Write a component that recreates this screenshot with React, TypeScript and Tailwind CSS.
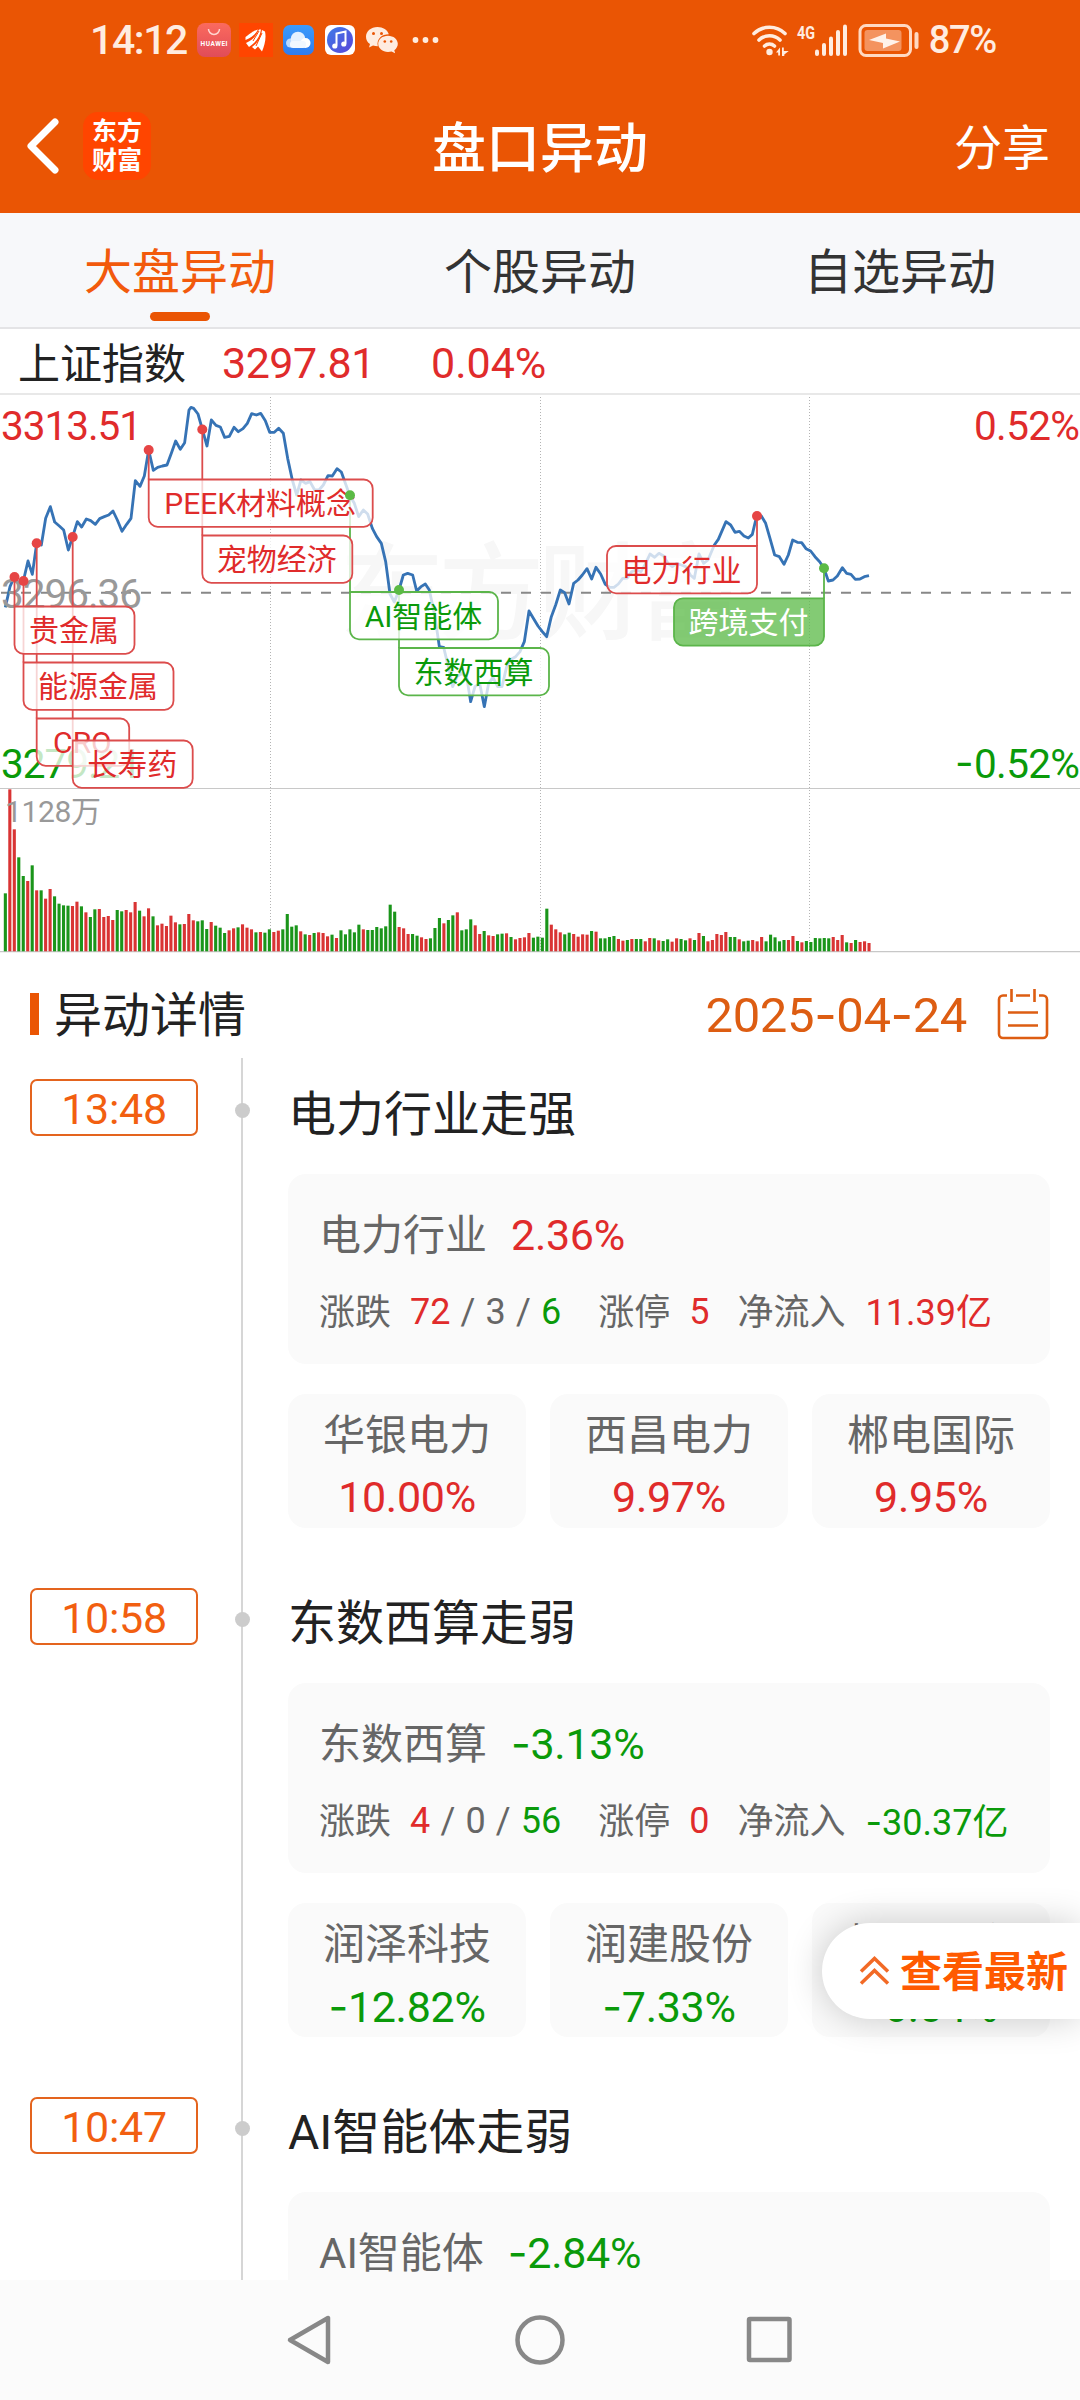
type Stock = { name: string; change: string };

type MoveEvent = {
  time: string;
  title: string;
  sector: string;
  change: string;
  up: string;
  flat: string;
  down: string;
  limit: string;
  inflow: string;
  stocks: Stock[];
};

type Tag = {
  text: string;
  // anchor point on the curve
  px: number;
  py: number;
  top: number;
  width: number;
  color: "red" | "green";
  side?: "left" | "right";
  filled?: boolean;
};

const RED = "#e02b2b";
const GREEN = "#0a9a0a";

const events: MoveEvent[] = [
  {
    time: "13:48",
    title: "电力行业走强",
    sector: "电力行业",
    change: "2.36%",
    up: "72",
    flat: "3",
    down: "6",
    limit: "5",
    inflow: "11.39亿",
    stocks: [
      { name: "华银电力", change: "10.00%" },
      { name: "西昌电力", change: "9.97%" },
      { name: "郴电国际", change: "9.95%" },
    ],
  },
  {
    time: "10:58",
    title: "东数西算走弱",
    sector: "东数西算",
    change: "-3.13%",
    up: "4",
    flat: "0",
    down: "56",
    limit: "0",
    inflow: "-30.37亿",
    stocks: [
      { name: "润泽科技", change: "-12.82%" },
      { name: "润建股份", change: "-7.33%" },
      { name: "拓维信息", change: "-6.04%" },
    ],
  },
  {
    time: "10:47",
    title: "AI智能体走弱",
    sector: "AI智能体",
    change: "-2.84%",
    up: "",
    flat: "",
    down: "",
    limit: "",
    inflow: "",
    stocks: [],
  },
];

// Minute curve, in thirds of a pixel
const curve =
  "16,652 30,590 43,560 56,580 70,573 84,513 97,553 110,460 124,465 137,385 151,350 164,396 178,408 191,420 205,480 218,440 232,395 245,411 259,387 272,392 286,403 299,386 313,380 326,375 339,363 352,390 366,424 380,403 393,385 406,272 420,289 433,258 446,180 460,241 473,232 487,228 501,225 514,190 527,153 541,178 554,158 567,60 573,52 581,55 594,72 607,118 621,168 634,90 648,106 661,111 674,142 688,139 702,112 715,125 729,116 742,100 755,71 769,75 782,70 796,92 809,127 823,127 836,115 850,130 863,205 877,270 890,315 903,270 917,280 930,275 944,300 957,300 970,285 984,257 997,258 1011,236 1024,246 1038,285 1049,316 1063,340 1076,380 1090,360 1103,372 1117,415 1130,440 1144,460 1157,515 1170,612 1183,636 1197,600 1210,555 1223,550 1238,555 1250,603 1263,590 1276,582 1288,600 1305,680 1318,770 1331,772 1345,830 1358,890 1371,860 1385,850 1400,860 1412,935 1425,890 1439,880 1453,950 1466,880 1479,862 1493,890 1506,890 1520,830 1533,808 1547,800 1560,785 1573,755 1587,663 1600,685 1614,708 1627,725 1640,740 1654,680 1667,645 1681,600 1694,608 1707,642 1721,580 1734,570 1747,555 1761,536 1775,567 1788,532 1802,552 1816,583 1830,592 1842,592 1855,582 1868,565 1882,564 1895,545 1910,540 1923,545 1937,520 1950,492 1964,502 1977,490 1990,497 2004,520 2017,530 2030,520 2044,525 2057,530 2071,555 2083,565 2097,492 2111,520 2124,510 2143,465 2155,448 2178,395 2192,405 2205,427 2218,424 2232,438 2245,444 2257,433 2270,378 2284,378 2297,400 2310,445 2324,495 2338,500 2352,523 2365,495 2378,450 2392,457 2405,458 2418,476 2432,483 2445,500 2459,515 2472,535 2485,573 2499,570 2512,558 2527,533 2540,550 2553,553 2566,568 2580,567 2593,560 2607,557";

// Top edge of every volume bar (thirds of a pixel), negative = falling minute
const volumes = [
  -340, 28, 148, -232, -288, 303, -256, 331, -331, 356, 327, -349, -371, -376, -377, 378, 365, -379, 397, -411,
  -388, 387, 411, 408, 420, -390, -394, 390, 397, 366, -392, 409, 385, -409, 436, 431, 438, 407, 427, -433,
  432, 402, 421, -424, -421, -447, 426, -437, -443, -459, 451, 445, -442, 433, 443, 448, -457, 456, -458, -448,
  456, 452, -448, -402, -440, -436, 454, -463, 465, -459, 457, 459, 469, -464, 474, -451, -463, -448, -457, -434,
  448, -450, -450, -441, -445, -439, -374, -395, 441, 445, 462, -462, -467, 472, 477, -475, -444, -414, 430, -420,
  -406, 397, -451, -448, -418, 436, 462, -453, 466, 468, -463, -461, 460, -471, 478, 474, 472, 459, -473, -470,
  -473, -386, 434, 448, 457, -463, -458, 462, 470, 463, 464, -453, 455, -475, -475, -471, -468, 477, 482, -480,
  477, -477, -477, 484, 474, -475, 481, -483, -478, 485, 475, -477, -481, 475, -480, 459, -468, 484, 480, 462,
  465, 456, -471, -471, 478, -484, -482, 480, 484, 471, -484, -464, -472, -484, -480, 480, 468, -483, 487, -483,
  -486, -474, -475, -474, -475, 471, 480, 465, -487, 489, -480, 486, 484, 489,
];

const tags: Tag[] = [
  { text: "贵金属", px: 14.5, py: 187, top: 216.5, width: 120, color: "red" },
  { text: "能源金属", px: 23.5, py: 191, top: 272.5, width: 150, color: "red" },
  { text: "CRO", px: 36.7, py: 153.3, top: 328.5, width: 92.5, color: "red" },
  { text: "长寿药", px: 72.7, py: 147, top: 350.5, width: 120, color: "red" },
  { text: "PEEK材料概念", px: 148.7, py: 60, top: 89.5, width: 224, color: "red" },
  { text: "宠物经济", px: 202.3, py: 39.5, top: 145.5, width: 150, color: "red" },
  { text: "AI智能体", px: 350, py: 105.3, top: 202, width: 148, color: "green" },
  { text: "东数西算", px: 399, py: 200, top: 258, width: 150, color: "green" },
  { text: "电力行业", px: 757, py: 126, top: 156, width: 150, color: "red", side: "right" },
  { text: "跨境支付", px: 824, py: 178.3, top: 208.3, width: 150, color: "green", side: "right", filled: true },
];

function tone(value: string) {
  return value.startsWith("-") ? "text-[#0a9a0a]" : "text-[#e02b2b]";
}

// Roboto's hyphen is too short next to its digits, Inter has a wider one
function Num({ value }: { value: string }) {
  return (
    <>
      {value.split(/(-)/).map((part, i) =>
        part === "-" ? (
          <span key={i} className="font-[Inter]">
            -
          </span>
        ) : (
          part
        )
      )}
    </>
  );
}

function StatusBar() {
  return (
    <div className="flex h-[79px] items-center pt-[1px] pl-[90px] pr-[84px] text-[#ffece0]">
      <span className="w-[107px] text-[41px] leading-none font-medium tracking-[-1.4px]">14:12</span>
      <svg width="245" height="36" viewBox="0 0 245 36">
        <defs>
          <linearGradient id="bag" x1="0" y1="0" x2="0" y2="1">
            <stop offset="0" stopColor="#fb6a5e" />
            <stop offset="1" stopColor="#e04c58" />
          </linearGradient>
          <linearGradient id="sky" x1="0" y1="0" x2="0" y2="1">
            <stop offset="0" stopColor="#3b9bfb" />
            <stop offset="1" stopColor="#2f7cf0" />
          </linearGradient>
          <linearGradient id="disc" x1="0" y1="0" x2="1" y2="1">
            <stop offset="0" stopColor="#3f7be8" />
            <stop offset="1" stopColor="#5a46d8" />
          </linearGradient>
        </defs>
        <rect x="0" y="1" width="34" height="34" rx="8" fill="url(#bag)" />
        <path d="M11.500 7a5.500 5.500 0 0 0 11 0" fill="none" stroke="#ffd5cf" strokeWidth="1.500" />
        <text x="17" y="23.500" fontSize="6.500" fontWeight="700" textAnchor="middle" textLength="27" fill="#fff">
          HUAWEI
        </text>
        <rect x="42" y="1" width="34" height="34" fill="#ff4500" />
        <path
          d="M48.500 15c6-4 8-6.500 12.500-7.500c-2 4-6 8-12.500 10.500zM49 21c7-3 10-7 13-13.500l2 0c-1 7-5 13-12 17.500zM55 25c6-4 9-10 10-17l3 1.500c1.500 7-.5 14-3 20l-4-5l-3 3z"
          fill="#fff"
        />
        <path d="M56 19l6-10M59 24l6-13" stroke="#ff4500" strokeWidth="1" />
        <rect x="86" y="3" width="31" height="30" rx="7" fill="url(#sky)" />
        <circle cx="93.500" cy="21" r="4.500" fill="#b9d9ff" />
        <circle cx="101" cy="17" r="7.300" fill="#e4f1ff" />
        <circle cx="108.500" cy="21" r="5" fill="#fff" />
        <rect x="93" y="19" width="16" height="7" rx="3" fill="#f2f8ff" />
        <rect x="128" y="3" width="30" height="30" rx="6" fill="#fff" />
        <circle cx="143" cy="18" r="13" fill="url(#disc)" />
        <path d="M139.500 23.500V11.500l9-2v12" fill="none" stroke="#fff" strokeWidth="2" />
        <circle cx="137.800" cy="24" r="2.600" fill="#fff" />
        <circle cx="146.800" cy="22" r="2.600" fill="#fff" />
        <path
          d="M180.500 5c-6.500 0-11.500 4.300-11.500 9.700c0 3 1.500 5.600 4 7.400l-1 3.500l4-2c1.600.5 3.200.7 4.800.7c-1.500-7.500 4-12 11-12c-1.200-4.300-5.800-7.300-11.300-7.300z"
          fill="#ffece0"
        />
        <path
          d="M191 13.800c-5.500 0-9.800 3.600-9.800 8c0 4.500 4.300 8.100 9.800 8.100c1.300 0 2.500-.2 3.600-.5l3.500 1.800l-.8-3c2.200-1.500 3.500-3.800 3.500-6.400c0-4.400-4.400-8-9.800-8z"
          fill="#ffece0"
        />
        <circle cx="176.500" cy="11.500" r="1.500" fill="#ea5504" />
        <circle cx="184.500" cy="11.500" r="1.500" fill="#ea5504" />
        <circle cx="187.800" cy="19.500" r="1.300" fill="#ea5504" />
        <circle cx="194.200" cy="19.500" r="1.300" fill="#ea5504" />
        <circle cx="218.500" cy="18" r="2.900" fill="#ffece0" />
        <circle cx="228.500" cy="18" r="2.900" fill="#ffece0" />
        <circle cx="238.500" cy="18" r="2.900" fill="#ffece0" />
      </svg>
      <svg width="170" height="36" viewBox="0 0 170 36" className="ml-auto mr-[8px]">
        <g fill="none" stroke="#ffece0" strokeWidth="3.600" strokeLinecap="round">
          <path d="M3 11.500a22.500 22.500 0 0 1 31 0" />
          <path d="M8 18a15 15 0 0 1 21 0" />
          <path d="M13.500 24a7.500 7.500 0 0 1 10 0" />
        </g>
        <circle cx="18.500" cy="30" r="3.200" fill="#ffece0" />
        <path d="M25 30.500l4-5v8h-1.800v-3zM31 25.500h1.800v3.500l5 0l-4.500 3.500v1.500h-2.300z" fill="#ffece0" />
        <text x="46" y="17" fontSize="19" fontWeight="700" textLength="18" lengthAdjust="spacingAndGlyphs" fill="#ffece0">
          4G
        </text>
        <g fill="#ffece0">
          <rect x="64" y="27.500" width="4" height="6.500" rx="2" />
          <rect x="71" y="21" width="4" height="13" rx="2" />
          <rect x="78" y="14.500" width="4" height="19.500" rx="2" />
          <rect x="85" y="8" width="4" height="26" rx="2" />
          <rect x="92" y="2.500" width="4" height="31.500" rx="2" />
        </g>
        <rect x="109" y="3.500" width="50.500" height="30" rx="6" fill="none" stroke="#ffd9c2" strokeWidth="3" />
        <rect x="113.500" y="8" width="37" height="21" rx="3" fill="#f4935f" />
        <path d="M118 17.500l14 3v5.500l17-7l-14-3V11z" fill="#fff2ea" transform="translate(0 .5)" />
        <rect x="163.500" y="10" width="4" height="17" rx="2" fill="#ffd9c2" />
      </svg>
      <span className="text-[38px] leading-none font-medium tracking-[-1.3px]">87%</span>
    </div>
  );
}

function Header() {
  return (
    <header className="h-[213px] bg-[#ea5504]">
      <StatusBar />
      <div className="grid h-[134px] grid-cols-3 items-center text-white">
        <div className="flex items-center pl-[25px]">
          <svg width="36" height="60" viewBox="0 0 36 60" fill="none" stroke="#fff" strokeWidth="7" strokeLinecap="round" strokeLinejoin="round">
            <path d="M30 6L6 30L30 54" />
          </svg>
          <div className="ml-[22px] flex h-[68px] w-[68px] flex-col items-center justify-center rounded-[15px] bg-[#ff4500] text-[25px] leading-[29px] font-bold">
            <span>东方</span>
            <span>财富</span>
          </div>
        </div>
        <h1 className="pt-[8px] text-center text-[54px] leading-none font-medium">盘口异动</h1>
        <span className="pt-[6px] pr-[30px] text-right text-[48px] leading-none">分享</span>
      </div>
    </header>
  );
}

function Tabs() {
  const tabs = ["大盘异动", "个股异动", "自选异动"];
  return (
    <nav className="grid h-[116px] grid-cols-3 border-b-2 border-[#e4e4e6] bg-[#f7f8fa]">
      {tabs.map((tab, i) => (
        <div key={tab} className="flex flex-col items-center">
          <span className={`mt-[30px] h-[60px] text-[48px] leading-[60px] ${i === 0 ? "text-[#f25a0c]" : "text-[#333]"}`}>
            {tab}
          </span>
          {i === 0 && <i className="mt-[9px] h-[9px] w-[60px] rounded-full bg-[#ea5504]" />}
        </div>
      ))}
    </nav>
  );
}

function TagShape({ tag }: { tag: Tag }) {
  const { px, top, width: w, side, filled } = tag;
  const h = 47.3;
  const r = 9;
  const stroke = tag.color === "red" ? "#dc4c4c" : "#5bb54a";
  const x = side === "right" ? px - w : px;
  // the corner that meets the stem stays square
  const tl = side === "right" ? r : 0;
  const tr = side === "right" ? 0 : r;
  const d = `M${x + tl} ${top}H${x + w - tr}a${tr} ${tr} 0 0 1 ${tr} ${tr}V${top + h - r}a${r} ${r} 0 0 1 ${-r} ${r}H${x + r}a${r} ${r} 0 0 1 ${-r} ${-r}V${top + tl}a${tl} ${tl} 0 0 1 ${tl} ${-tl}z`;
  const textColor = filled ? "#fff" : tag.color === "red" ? RED : GREEN;
  return (
    <g>
      <path d={d} fill={filled ? "#5cba48" : "#fff"} fillOpacity={0.76} stroke={stroke} strokeWidth="1.8" />
      <text x={x + w / 2 - 0.5} y={top + 34.5} fontSize="30" textAnchor="middle" fill={textColor}>
        {tag.text}
      </text>
    </g>
  );
}

function Chart() {
  return (
    <svg width="1080" height="563" viewBox="0 3 1080 563" className="block">
      <rect x="0" y="3" width="1080" height="2" fill="#e8e8e8" />
      <text x="541" y="241" fontSize="106" fontWeight="500" textAnchor="middle" textLength="404" fill="#f7f7f7">
        东方财富
      </text>
      <g stroke="#b4b4b4" strokeWidth="1" strokeDasharray="1 2">
        <path d="M270.500 7V562" />
        <path d="M540.500 7V562" />
        <path d="M809.500 7V562" />
      </g>
      <path d="M0 398.500H1080M0 561.700H1080" stroke="#c8c8c8" strokeWidth="1.200" />
      {volumes.map((v, i) => {
        const y = Math.abs(v) / 3 + 390;
        // the volume pane starts at the page's 780px line
        return (
          <rect key={i} x={3.8 + i * 4.475} y={y} width="3.100" height={561.3 - y} fill={v > 0 ? "#d93434" : "#1a951a"} />
        );
      })}
      <path d="M1 202.700H1080" stroke="#888" strokeWidth="2" strokeDasharray="10 10" />
      <polyline points={curve} transform="scale(.33333)" fill="none" stroke="#3673b5" strokeWidth="8.500" strokeLinejoin="round" />
      <g fontSize="40.500">
        <text x="1" y="50" fill={RED} textLength="141">3313.51</text>
        <text x="1" y="218" fill="#999" textLength="141">3296.36</text>
        <text x="1" y="388" fill={GREEN} textLength="141">3279.21</text>
        <text x="974" y="50" fill={RED} textLength="106">0.52%</text>
        <text x="974" y="388" fill={GREEN} textLength="106">0.52%</text>
        <text x="955" y="387" fill={GREEN} className="font-[Inter]">-</text>
      </g>
      <text x="5" y="432" fontSize="30" fill="#999" textLength="96">1128万</text>
      {tags.map((t) => (
        <path key={t.text} d={`M${t.px} ${t.py}V${t.top}`} stroke={t.color === "red" ? "#dc4c4c" : "#5bb54a"} strokeWidth="1.8" />
      ))}
      {tags.map((t) => (
        <TagShape key={t.text} tag={t} />
      ))}
      {tags.map((t) => (
        <circle key={t.text} cx={t.px} cy={t.py} r="5" fill={t.color === "red" ? "#e64545" : "#5bba45"} />
      ))}
    </svg>
  );
}

function EventItem({ event }: { event: MoveEvent }) {
  return (
    <section className="flex h-[509px] shrink-0">
      <div className="w-[241px] pt-[21px] pl-[30px]">
        <div className="flex h-[57px] w-[168px] items-center justify-center rounded-[7px] border-2 border-[#e4641e] pt-[3px] text-[43px] leading-none tracking-[-.3px] text-[#f25f10]">
          {event.time}
        </div>
      </div>
      <div className="flex w-[2px] flex-col items-center bg-[#d6d6d6]">
        <i className="mt-[45px] h-[15px] w-[15px] shrink-0 rounded-full bg-[#ccc]" />
      </div>
      <div className="w-[837px] pr-[30px] pl-[45px]">
        <h3 className="flex h-[116px] items-center pb-[2px] text-[48px] leading-none text-[#222]">{event.title}</h3>
        <div className="h-[190px] rounded-[18px] bg-[#fafafa] pt-[32px] pl-[31px]">
          <div className="flex h-[58px] items-center gap-[24px] text-[42px] leading-none">
            <span className="pt-[2px] text-[#666]">{event.sector}</span>
            <span className={`text-[43px] tracking-[-.3px] ${tone(event.change)}`}>
              <Num value={event.change} />
            </span>
          </div>
          {event.up && (
            <div className="mt-[22px] flex h-[52px] items-center text-[36px] leading-none whitespace-nowrap">
              <span className="pt-[2px] text-[#666]">涨跌</span>
              <span className="ml-[19px] [word-spacing:1.2px] text-[#666]">
                <b className="font-normal text-[#e02b2b]">{event.up}</b> / {event.flat} /{" "}
                <b className="font-normal text-[#0a9a0a]">{event.down}</b>
              </span>
              <span className="ml-[37px] pt-[2px] text-[#666]">涨停</span>
              <span className="ml-[19px] text-[#e02b2b]">{event.limit}</span>
              <span className="ml-[28px] pt-[2px] text-[#666]">净流入</span>
              <span className={`ml-[20px] pt-[2px] ${tone(event.inflow)}`}>
                <Num value={event.inflow} />
              </span>
            </div>
          )}
        </div>
        <div className="mt-[30px] grid grid-cols-3 gap-[24px]">
          {event.stocks.map((stock) => (
            <div key={stock.name} className="flex h-[134px] flex-col items-center rounded-[18px] bg-[#fafafa] pt-[12px] text-[42px]">
              <span className="h-[60px] leading-[60px] text-[#666]">{stock.name}</span>
              <span className={`h-[60px] text-[43px] leading-[62px] tracking-[-.3px] ${tone(stock.change)}`}>
                <Num value={stock.change} />
              </span>
            </div>
          ))}
        </div>
      </div>
    </section>
  );
}

export default function App() {
  return (
    <div className="relative flex h-[2400px] w-[1080px] flex-col overflow-hidden bg-white font-[Roboto,'Noto_Sans_CJK_SC',sans-serif]">
      <Header />
      <Tabs />
      <div className="flex h-[64px] items-center pt-[5px] pl-[18px] text-[42px] leading-none">
        <span className="pt-[2px] text-[#222]">上证指数</span>
        <span className="ml-[36px] w-[209px] text-[43px] tracking-[-.5px] text-[#e02b2b]">3297.81</span>
        <span className="text-[43px] text-[#e02b2b]">0.04%</span>
      </div>
      <Chart />

      <div className="flex h-[102px] items-center pt-[14px] pr-[31px] pl-[30px]">
        <i className="h-[42px] w-[9px] bg-[#ea5504]" />
        <h2 className="ml-[15px] pt-[3px] text-[48px] leading-none text-[#222]">异动详情</h2>
        <span className="ml-auto pt-[2px] text-[49px] leading-none tracking-[-.4px] text-[#dd5d12]">
          <Num value="2025-04-24" />
        </span>
        <svg width="52" height="52" viewBox="0 0 52 52" className="ml-[30px]" fill="none" stroke="#dd5d12" strokeWidth="2.600">
          <path d="M10 7.500H6a4 4 0 0 0-4 4V46a4 4 0 0 0 4 4h40a4 4 0 0 0 4-4V11.500a4 4 0 0 0-4-4h-4M19 7.500h14" />
          <path d="M14.500 1v13M37.500 1v13M11 24.500h30M11 37.500h30" />
        </svg>
      </div>

      <main className="flex h-[1222px] flex-col overflow-hidden">
        {events.map((event) => (
          <EventItem key={event.time} event={event} />
        ))}
      </main>

      <footer className="flex h-[120px] items-center bg-[#fbfbfb] pl-[284px]">
        <svg width="510" height="56" viewBox="0 0 510 56" fill="none" stroke="#888" strokeWidth="4.500" strokeLinejoin="round">
          <path d="M44 6V50L6 28z" />
          <circle cx="256" cy="28" r="22.500" />
          <rect x="465" y="7" width="40.500" height="41" rx="1" />
        </svg>
      </footer>

      <button className="absolute top-[1923px] right-0 flex h-[96px] w-[258px] items-center rounded-l-full bg-white pl-[36px] text-[42px] leading-none font-bold text-[#ff5a00] shadow-[0_0_36px_rgba(0,0,0,0.2)]">
        <svg width="33" height="34" viewBox="0 0 33 34" fill="none" stroke="#f26a26" strokeWidth="3.500" className="mr-[9px]">
          <path d="M3 17.500L16.500 4.500L30 17.500M3 29.500L16.500 16.500L30 29.500" />
        </svg>
        <span className="pt-[4px]">查看最新</span>
      </button>
    </div>
  );
}
